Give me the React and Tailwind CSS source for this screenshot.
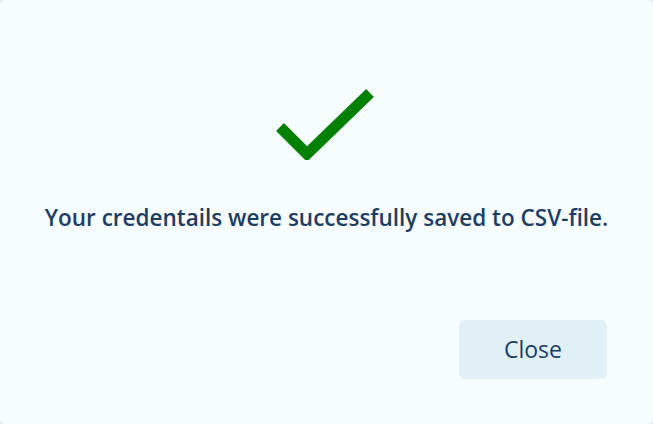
export default function App() {
  return (
    <div className="h-[424px] w-[653px] bg-[#e6eef2]" style={{ fontFamily: '"Open Sans", "Noto Sans", sans-serif' }}>
      <div className="flex h-full w-full flex-col items-center rounded-[6px] bg-[#f5fdff]">
        <svg width="98" height="72" viewBox="0 0 98 72" className="mt-[88px] -ml-[4px]" aria-hidden="true">
          <polyline points="4,39 31,66 94,5" fill="none" stroke="#008000" strokeWidth="11" strokeLinejoin="miter" />
        </svg>
        <p className="mt-[43px] text-[22.5px] leading-[30px] font-semibold text-[#1f3d63]">
          Your credentails were successfully saved to CSV-file.
        </p>
        <div className="mt-auto mb-[45px] flex w-full justify-end pr-[46px]">
          <button className="h-[59px] w-[148px] rounded-[6px] bg-[#e0f0f6] text-[23px] text-[#1f3d63]">
            Close
          </button>
        </div>
      </div>
    </div>
  );
}
